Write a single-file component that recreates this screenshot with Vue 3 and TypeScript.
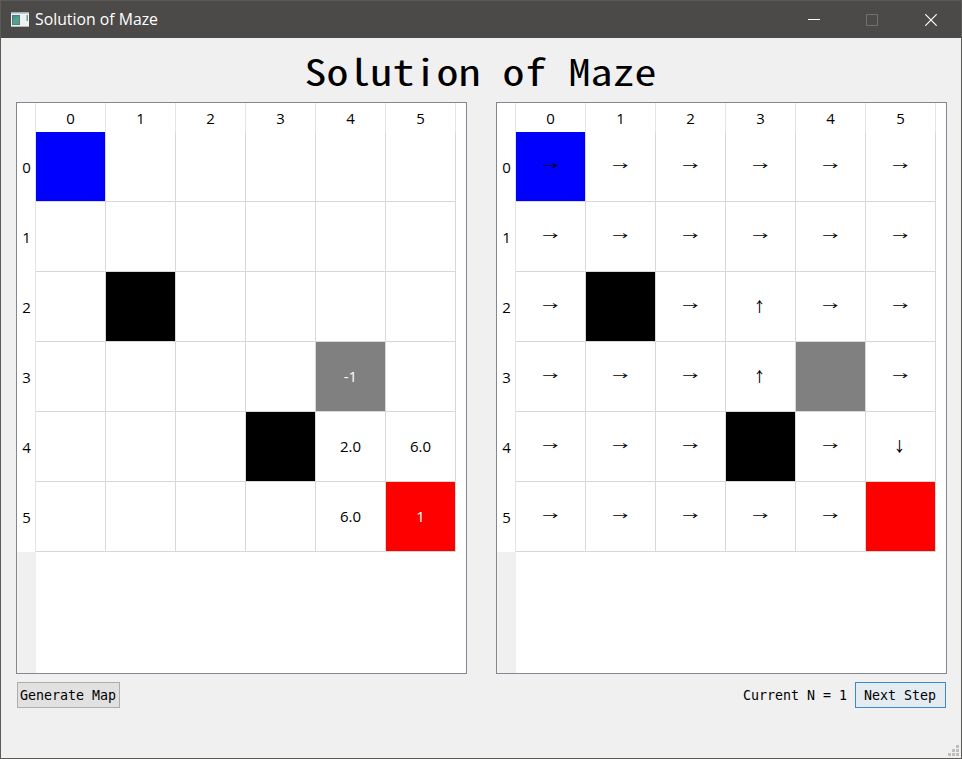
<script setup lang="ts">
interface Cell {
  text: string
  kind?: 'start' | 'wall' | 'trap' | 'goal'
}

const indices = [0, 1, 2, 3, 4, 5]

const kinds: Record<string, Cell['kind']> = {
  '0,0': 'start',
  '2,1': 'wall',
  '3,4': 'trap',
  '4,3': 'wall',
  '5,5': 'goal',
}

const values: string[][] = [
  ['', '', '', '', '', ''],
  ['', '', '', '', '', ''],
  ['', '', '', '', '', ''],
  ['', '', '', '', '-1', ''],
  ['', '', '', '', '2.0', '6.0'],
  ['', '', '', '', '6.0', '1'],
]

const policy: string[][] = [
  ['→', '→', '→', '→', '→', '→'],
  ['→', '→', '→', '→', '→', '→'],
  ['→', '', '→', '↑', '→', '→'],
  ['→', '→', '→', '↑', '', '→'],
  ['→', '→', '→', '', '→', '↓'],
  ['→', '→', '→', '→', '→', ''],
]

const toCells = (rows: string[][]): Cell[][] =>
  rows.map((row, r) => row.map((text, c) => ({ text, kind: kinds[`${r},${c}`] })))

const tables = [
  { name: 'values', rows: toCells(values) },
  { name: 'policy', rows: toCells(policy) },
]

const arrowClass = (text: string): string => {
  if (text === '→') return 'across'
  return text === '↑' || text === '↓' ? 'upright' : ''
}

const step = 1
</script>

<template>
  <div class="window">
    <header class="titlebar">
      <svg class="app-icon" width="18" height="15" viewBox="0 0 18 15">
        <rect width="18" height="15" fill="#f1f1f1" />
        <rect width="18" height="1.5" fill="#a9abb0" />
        <rect x="1" y="3" width="8" height="10" fill="#4a8f9b" />
        <path d="M1 13V8l8-5v10z" fill="#55a37e" />
        <rect x="1.5" y="3.5" width="7" height="9" fill="none" stroke="#3c6f96" stroke-opacity=".6" />
        <rect x="15.500" y="3" width="1.500" height="6" fill="#5aa78c" />
        <rect y="14" width="18" height="1" fill="#b9b9b9" />
      </svg>
      <span class="caption">Solution of Maze</span>
      <div class="controls">
        <svg width="12" height="12" viewBox="0 0 12 12"><path d="M0 5.500H12" stroke="#fff" /></svg>
        <svg width="12" height="12" viewBox="0 0 12 12"><rect x=".5" y=".5" width="11" height="11" fill="none" stroke="#706f6d" /></svg>
        <svg class="close" width="12" height="12" viewBox="0 0 12 12"><path d="M.3.3 11.700 11.700M11.700.3.3 11.700" stroke="#fff" stroke-width="1.200" /></svg>
      </div>
    </header>

    <main class="body">
      <h1 class="heading">Solution of Maze</h1>
      <div class="tables">
        <section v-for="table in tables" :key="table.name" class="frame">
          <div class="grid">
            <div class="corner"></div>
            <div v-for="i in indices" :key="i" class="col-head">{{ i }}</div>
            <template v-for="(row, r) in table.rows" :key="r">
              <div class="row-head">{{ r }}</div>
              <div v-for="(cell, c) in row" :key="c" class="cell" :class="[cell.kind, table.name]">
                <span :class="arrowClass(cell.text)">{{ cell.text }}</span>
              </div>
            </template>
          </div>
          <div class="gutter"></div>
        </section>
      </div>
      <footer class="actions">
        <button class="btn">Generate Map</button>
        <span class="status">Current N = {{ step }}</span>
        <button class="btn primary">Next Step</button>
      </footer>
    </main>

    <svg class="grip" width="11" height="11" viewBox="0 0 11 11" fill="#bfbfbf">
      <path d="M8 0h3v3H8zM4 4h3v3H4zM8 4h3v3H8zM0 8h3v3H0zM4 8h3v3H4zM8 8h3v3H8z" />
    </svg>
  </div>
</template>

<style>
body {
  margin: 0;
}
</style>

<style scoped>
.window {
  position: relative;
  box-sizing: border-box;
  width: 962px;
  height: 759px;
  border: 1px solid #5b5a59;
  background: #f0f0f0;
  color: #000;
  font-family: 'Open Sans', 'Noto Sans', sans-serif;
}
.titlebar {
  display: flex;
  align-items: center;
  height: 37px;
  padding-left: 10px;
  background: #4b4a48;
  color: #fff;
}
.app-icon {
  margin-bottom: 1px;
}
.caption {
  margin: 0 0 1px 6px;
  font-size: 15.8px;
  line-height: 20px;
}
.controls {
  display: flex;
  gap: 46px;
  margin-left: auto;
  padding-right: 24px;
}
.close {
  margin-left: 1px;
}
.body {
  padding: 0 14px 0 15px;
}
.heading {
  margin: 0;
  height: 64px;
  font: 400 44px/68px 'Noto Sans Mono CJK SC', monospace;
  text-align: center;
  transform: translate(-1px, -1.5px) scaleY(0.82);
}
.tables {
  display: flex;
  justify-content: space-between;
}
.frame {
  display: flex;
  flex-direction: column;
  box-sizing: border-box;
  width: 451px;
  height: 572px;
  border: 1px solid #828790;
  background: #fff;
}
.grid {
  display: grid;
  grid-template-columns: 19px repeat(6, 70px);
  grid-template-rows: 29px repeat(6, 70px);
  font-size: 15px;
}
.corner,
.col-head,
.row-head {
  display: flex;
  align-items: center;
  justify-content: center;
  border-right: 1px solid #e5e5e5;
}
.row-head {
  padding-left: 1px;
}
.cell {
  display: flex;
  align-items: center;
  justify-content: center;
  border-right: 1px solid #d8d8d8;
  border-bottom: 1px solid #d8d8d8;
}
.values {
  padding-bottom: 1px;
}
.policy {
  padding-bottom: 2px;
  font-family: 'Noto Sans CJK SC', sans-serif;
  font-size: 16px;
  font-weight: 500;
}
.across {
  transform: translateY(-1px) scaleY(0.65);
}
.upright {
  transform: translateX(-0.5px) scale(0.75, 0.9);
}
.start {
  background: #00f;
}
.wall {
  background: #000;
}
.trap {
  background: #808080;
  color: #fff;
}
.goal {
  background: #f00;
  color: #fff;
}
.gutter {
  flex: 1;
  width: 19px;
  background: #f0f0f0;
}
.actions {
  display: flex;
  align-items: center;
  height: 26px;
  padding: 8px 1px 0;
  font: 13.3px/16px 'DejaVu Sans Mono', monospace;
}
.btn {
  box-sizing: border-box;
  width: 103px;
  height: 26px;
  padding: 2px 1px 0 0;
  border: 1px solid #adadad;
  background: #e1e1e1;
  color: #000;
  font: inherit;
}
.primary {
  width: 91px;
  border-color: #3c8ac9;
  background: #e4ebf1;
}
.status {
  margin: 0 8px 0 auto;
  padding-top: 2px;
}
.grip {
  position: absolute;
  right: 2px;
  bottom: 2px;
}
</style>
